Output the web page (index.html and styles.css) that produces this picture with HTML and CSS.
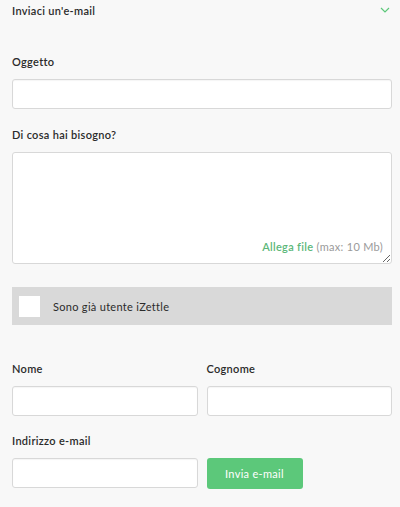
FILE: index.html
```html
<!DOCTYPE html>
<html lang="it">
<head>
    <meta charset="UTF-8">
    <meta name="viewport" content="width=device-width, initial-scale=1.0">
    <title>Inviaci un'e-mail</title>
    <link rel="stylesheet" href="styles.css">
</head>
<body>
    <div id="wrap">
        <!-- intestazione del pannello -->
        <div class="head">
            <span>Inviaci un'e-mail</span>
            <svg class="chevron" width="10" height="6" viewBox="0 0 10 6">
                <path d="M1 1l4 4 4-4" fill="none" stroke="#5cc87a" stroke-width="1.2"/>
            </svg>
        </div>

        <div class="field first">
            <label for="subject">Oggetto</label>
            <input type="text" id="subject" class="box">
        </div>

        <div class="field">
            <label for="message">Di cosa hai bisogno?</label>
            <div class="area">
                <textarea id="message"></textarea>
                <span class="attach"><a href="#">Allega file</a> (max: 10 Mb)</span>
            </div>
        </div>

        <!-- utente esistente -->
        <label class="user">
            <span class="check"></span>
            Sono già utente iZettle
        </label>

        <div class="row names">
            <div class="field">
                <label for="name">Nome</label>
                <input type="text" id="name" class="box">
            </div>
            <div class="field">
                <label for="surname">Cognome</label>
                <input type="text" id="surname" class="box">
            </div>
        </div>

        <div class="field mail">
            <label for="email">Indirizzo e-mail</label>
            <div class="row">
                <input type="email" id="email" class="box">
                <div class="send">
                    <button>Invia e-mail</button>
                </div>
            </div>
        </div>
    </div>
</body>
</html>
```

FILE: styles.css
```css
body {
    margin: 0;
    background-color: #f8f8f8;
    font-family: Lato, "Open Sans", sans-serif;
    font-size: 11px;
    letter-spacing: 0.3px;
    color: #2b2b2b;
}
#wrap {
    padding: 0 8px 0 12px;
}
.head {
    display: flex;
    justify-content: space-between;
    align-items: center;
    height: 16px;
    padding-top: 2px;
    font-weight: 600;
}
.chevron {
    margin-right: 2px;
}
.field label {
    display: block;
    line-height: 16px;
    margin-bottom: 9px;
    font-weight: 600;
}
.field.first {
    margin-top: 36px;
}
.field + .field {
    margin-top: 18px;
}
.box {
    box-sizing: border-box;
    display: block;
    width: 100%;
    height: 30px;
    background-color: #fff;
    border: 1px solid #d8d8d8;
    border-radius: 3px;
    box-shadow: inset 0 1px 1px rgba(0, 0, 0, 0.04);
    outline: none;
}
.area {
    position: relative;
}
textarea {
    box-sizing: border-box;
    display: block;
    width: 100%;
    height: 112px;
    background-color: #fff;
    border: 1px solid #d8d8d8;
    border-radius: 3px;
    resize: vertical;
    outline: none;
}
.attach {
    position: absolute;
    right: 9px;
    bottom: 11px;
    color: #9a9a9a;
}
.attach a {
    color: #5cb87a;
    font-weight: 600;
    text-decoration: none;
}
.user {
    display: flex;
    align-items: center;
    gap: 13px;
    height: 38px;
    margin-top: 23px;
    padding: 0 7px;
    background-color: #d9d9d9;
    cursor: pointer;
}
.check {
    width: 21px;
    height: 21px;
    background-color: #fff;
}
.row {
    display: grid;
    grid-template-columns: 1fr 1fr;
    gap: 9px;
}
.names {
    margin-top: 36px;
}
.names .field + .field {
    margin-top: 0;
}
.field.mail {
    margin-top: 17px;
}
.send button {
    width: 96px;
    height: 31px;
    background-color: #5cc87a;
    border: none;
    border-radius: 3px;
    color: #fff;
    font-family: inherit;
    font-size: 11px;
    letter-spacing: 0.3px;
    cursor: pointer;
}
.send button:hover {
    background-color: #4fb86c;
}
```
